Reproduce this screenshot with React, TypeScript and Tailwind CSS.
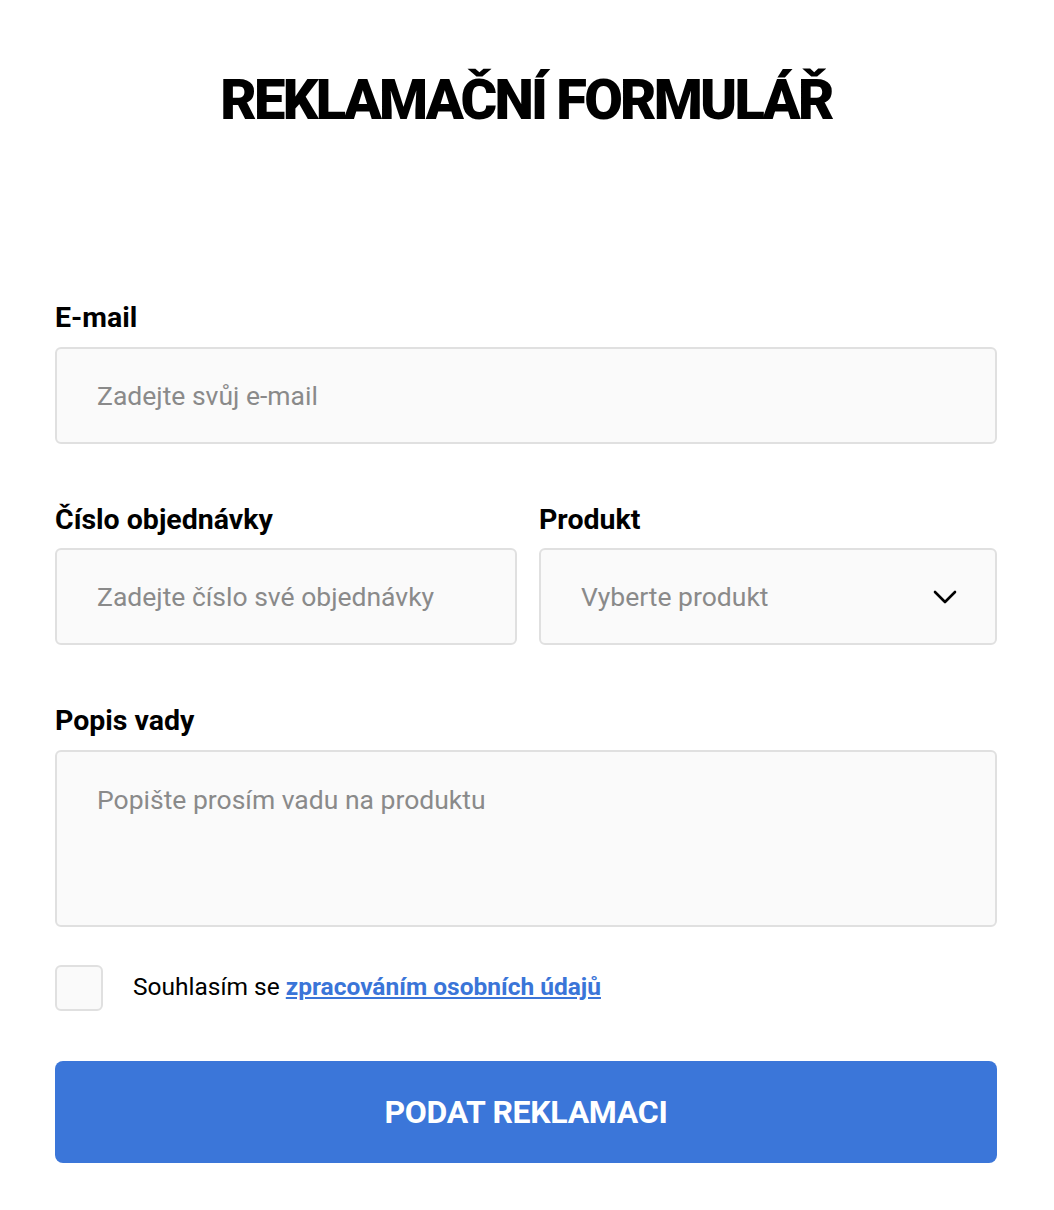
const FIELD = 'w-full border-2 border-[#e0e0e0] bg-[#fafafa] rounded-[6px] px-[40px] text-[26.5px] focus:outline-none'
const INPUT = `${FIELD} h-[97px] text-[#333] placeholder:text-[#8a8a8a]`
const LABEL = 'block text-[28.5px] font-bold text-black leading-none mb-[14px]'

export default function App() {
  return (
    <div className="min-h-screen bg-white font-['Roboto',sans-serif]">
      <main className="pl-[55px] pr-[57px] pt-[72px] pb-[40px]">
        <h1 className="text-center text-[56px] font-black text-black leading-none tracking-[-2.8px]">REKLAMAČNÍ FORMULÁŘ</h1>

        <form className="mt-[176px]">
          <div>
            <label className={LABEL}>E-mail</label>
            <input type="email" placeholder="Zadejte svůj e-mail" className={INPUT} />
          </div>

          <div className="grid grid-cols-[462px_1fr] gap-[22px] mt-[62px]">
            <div>
              <label className={LABEL}>Číslo objednávky</label>
              <input placeholder="Zadejte číslo své objednávky" className={INPUT} />
            </div>
            <div>
              <label className={LABEL}>Produkt</label>
              <div className="relative">
                <select defaultValue="" className={`${FIELD} h-[97px] appearance-none text-[#8a8a8a]`}>
                  <option value="" disabled>Vyberte produkt</option>
                </select>
                <svg width="24" height="14" viewBox="0 0 24 14" fill="none" className="absolute right-[40px] top-1/2 -translate-y-1/2 pointer-events-none">
                  <path d="M2 2l10 10L22 2" stroke="#000" strokeWidth="2.6" strokeLinecap="round" strokeLinejoin="round" />
                </svg>
              </div>
            </div>
          </div>

          <div className="mt-[62px]">
            <label className={LABEL}>Popis vady</label>
            <textarea placeholder="Popište prosím vadu na produktu" className={`${FIELD} block h-[177px] pt-[28px] text-[#333] placeholder:text-[#8a8a8a] resize-none`} />
          </div>

          <div className="flex items-center gap-[30px] mt-[38px]">
            <input type="checkbox" className="appearance-none w-[48px] h-[46px] border-2 border-[#e0e0e0] bg-[#fafafa] rounded-[6px] shrink-0" />
            <span className="text-[24.5px] text-black">
              Souhlasím se <a href="#" className="font-bold text-[#3a75d8] underline">zpracováním osobních údajů</a>
            </span>
          </div>

          <button type="button" className="w-full h-[102px] mt-[50px] bg-[#3b76d9] rounded-[8px] text-white text-[32px] font-bold tracking-[-0.3px]">
            PODAT REKLAMACI
          </button>
        </form>
      </main>
    </div>
  )
}
